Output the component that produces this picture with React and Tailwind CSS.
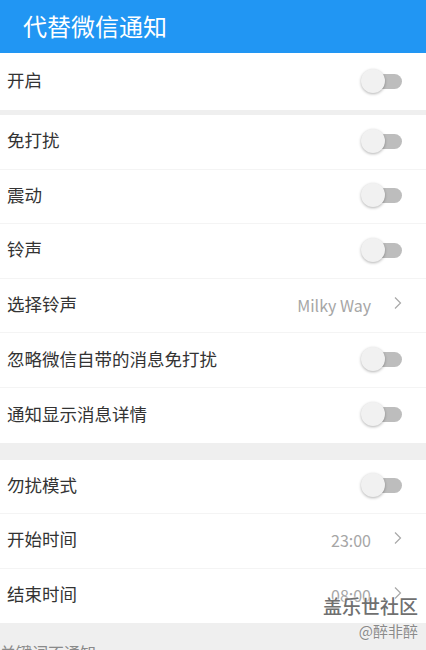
import React from "react";

const font = { fontFamily: '"Noto Sans CJK SC", "Noto Sans", Roboto, sans-serif' };

function Toggle() {
  return (
    <div className="relative w-[41px] h-[24px] mr-[24px] -mt-[2px]">
      <div className="absolute right-0 top-[5px] w-[32px] h-[15px] rounded-full bg-[#bdbdbd]" />
      <div className="absolute left-0 top-0 w-[24px] h-[24px] rounded-full bg-[#f1f1f1] shadow-[0_1px_3px_rgba(0,0,0,0.3)]" />
    </div>
  );
}

function Chevron() {
  return (
    <svg width="10" height="14" viewBox="0 0 10 14" className="ml-[22px] mr-[23px] -mt-[6px]">
      <path d="M2 1.5L7.5 7L2 12.5" fill="none" stroke="#a8a8a8" strokeWidth="1.2" />
    </svg>
  );
}

function Row({ label, value, toggle, last }) {
  return (
    <div
      className={`h-[54.6px] flex items-center justify-between pl-[7px] bg-white ${
        last ? "" : "border-b border-[#f4f4f4]"
      }`}
    >
      <span className="text-[17.5px] text-[#333] -mt-[3px]">{label}</span>
      {toggle ? (
        <Toggle />
      ) : (
        <div className="flex items-center">
          <span className="text-[16px] text-[#a6a6a6] -mt-[2px]">{value}</span>
          <Chevron />
        </div>
      )}
    </div>
  );
}

export default function App() {
  return (
    <div className="relative w-[426px] h-[650px] overflow-hidden bg-[#efefef]" style={font}>
      {/* Header */}
      <div className="h-[53px] bg-[#2196f3] flex items-center pl-[23px]">
        <span className="text-white text-[24px] -mt-[2px]">代替微信通知</span>
      </div>

      <div className="h-[57px] flex items-center justify-between pl-[7px] bg-white">
        <span className="text-[17.5px] text-[#333] -mt-[3px]">开启</span>
        <Toggle />
      </div>
      <div className="h-[5px]" />

      <Row label="免打扰" toggle />
      <Row label="震动" toggle />
      <Row label="铃声" toggle />
      <Row label="选择铃声" value="Milky Way" />
      <Row label="忽略微信自带的消息免打扰" toggle />
      <Row label="通知显示消息详情" toggle last />
      <div className="h-[17px]" />

      <Row label="勿扰模式" toggle />
      <Row label="开始时间" value="23:00" />
      <Row label="结束时间" value="08:00" last />

      <div className="pt-[17px] pl-0">
        <span className="text-[16px] text-[#8a8a8a]">关键词不通知</span>
      </div>

      {/* Watermark */}
      <div className="absolute right-[8px] top-[596px] flex flex-col items-end leading-none">
        <span
          className="text-[19px] text-[#707070] font-medium"
          style={{ textShadow: "0 0 2px #fff, 0 0 2px #fff" }}
        >
          盖乐世社区
        </span>
        <span
          className="text-[15px] text-[#8a8a8a] mt-[8px]"
          style={{ textShadow: "0 0 2px #fff" }}
        >
          @醉非醉
        </span>
      </div>
    </div>
  );
}
